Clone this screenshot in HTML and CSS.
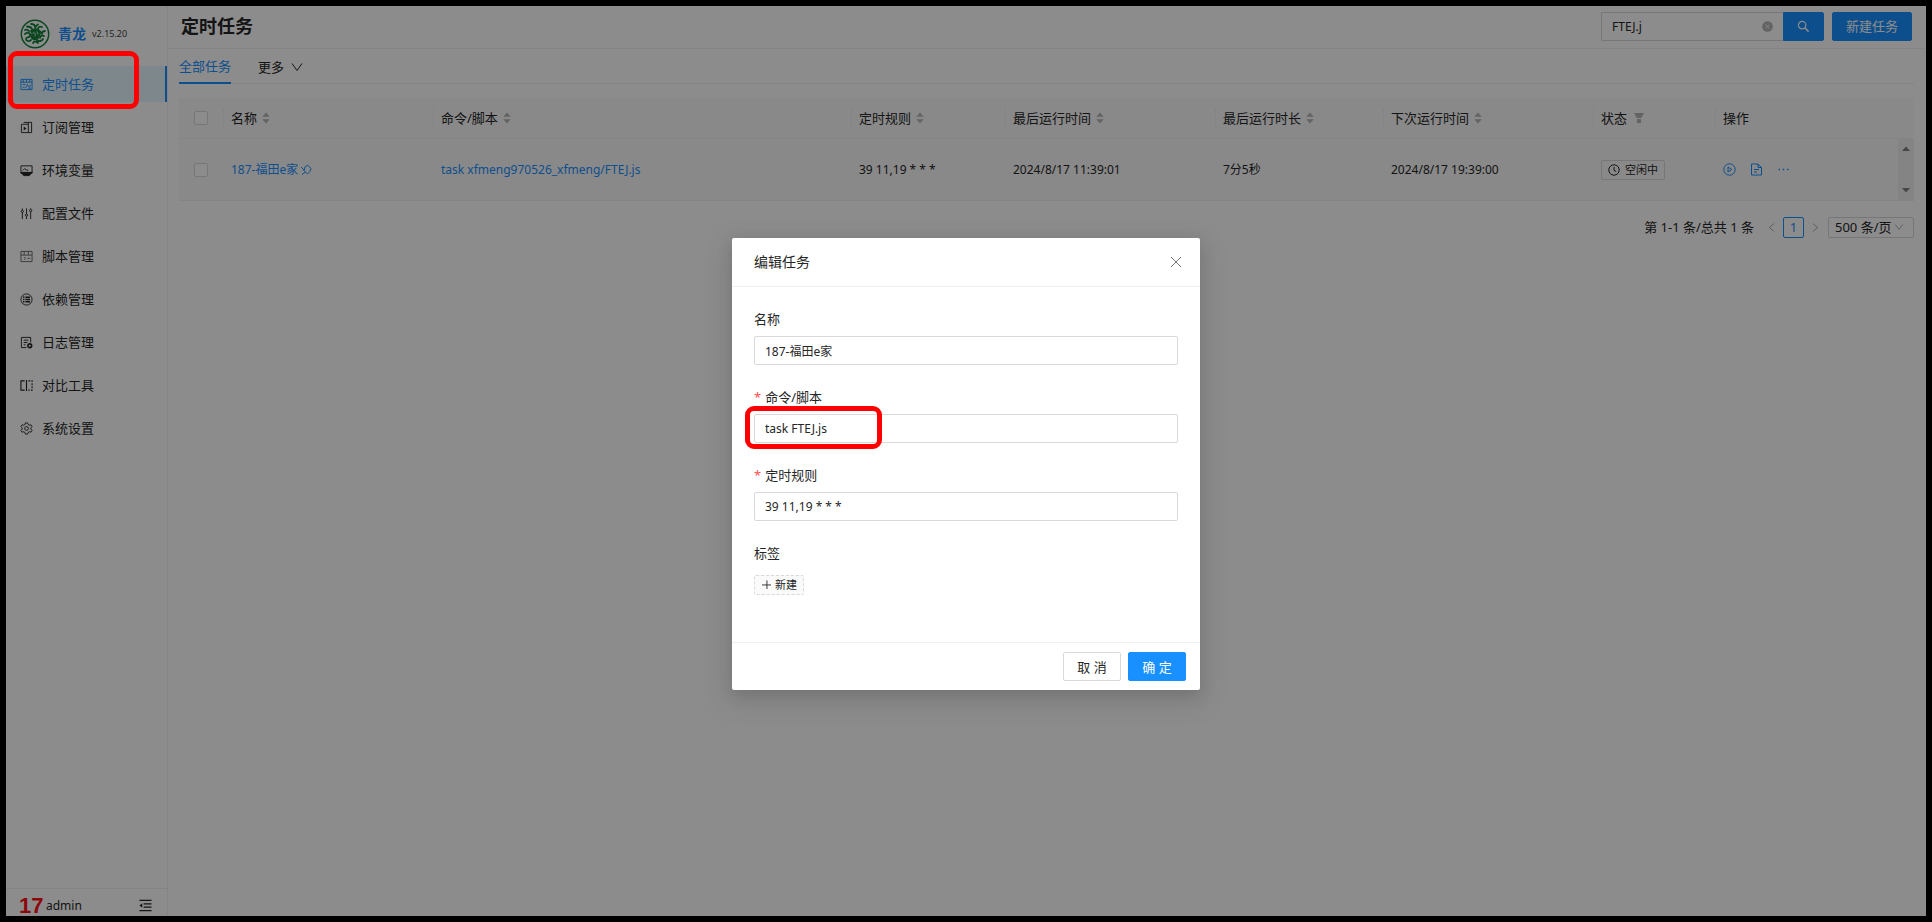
FILE: index.html
```
<!DOCTYPE html>
<html lang="zh-CN">
<head>
<meta charset="utf-8">
<title>定时任务</title>
<link rel="stylesheet" href="styles.css">
</head>
<body>
<svg class="defs" aria-hidden="true">
  <symbol id="sorter" viewBox="0 0 8 12"><path d="M4 0.5 7.7 4.800H0.300zM4 11.5 0.300 7.200H7.700z" fill="#b4b4b4"/></symbol>
</svg>
<div class="frame">
<div class="app">
  <aside class="sider">
    <a class="brand" href="#">
      <svg class="logo" viewBox="0 0 30 30" fill="none" stroke="#14803c" stroke-linecap="round">
        <circle cx="15" cy="15" r="13.700" stroke-width="1.500"/>
        <g stroke-width="1.800">
          <path d="M5 11c2-1 3 0 4 1M7 7.500c2 0 4 0 5 2.500M11 5c2 0 4 1 4 3M18 5.500c-2 1-3 2-2.500 4M22 8c-2-1-4 0-4 2s3 2 3 4M25 12c-2 0-3 1-3 3"/>
          <path d="M5 15c3-3 6 0 5 2s-4 1-4 3 3 3 5 1M17 21c2 2 5 1 6-1M24 17c-2-1-4 0-4 2M13 24c1-2 3-2 5 0"/>
        </g>
        <path d="M10 12c2-3 6-3 8-1 3 1 3 4 2 6-1 3-4 5-7 4-2-1-3-3-2-5s0-2-1-4z" fill="#14803c" stroke="none"/>
        <path d="M13 14c2-1 3 1 2 3M17 13l1 2" stroke="#d9ecdf" stroke-width="1"/>
      </svg>
      <span class="brand-name">青龙</span><span class="version">v2.15.20</span>
    </a>
    <nav class="menu">
      <a class="item active" href="#"><svg class="ico" viewBox="0 0 14 14"><path d="M1 1.500h12v11H1zM1 4.500h12M3.500 1.500v3M7 1.500v3M10.500 1.500v3M3 7h3M3 10h2M6 11l2-4 2 3 2-3M9 11h3"/></svg>定时任务</a>
      <a class="item" href="#"><svg class="ico" viewBox="0 0 14 14"><path d="M1.500 3.500h7.500v9H1.500zM9 1.500h3.500v11H9M4 1.500h5v2"/><path d="M4 5.800 7 8 4 10.200z" fill="currentColor" stroke="none"/></svg>订阅管理</a>
      <a class="item" href="#"><svg class="ico" viewBox="0 0 14 14"><path d="M1 2h12v8H1zM3 7l2-2 2 1.500h2"/><path d="M1 9h12l-3 3.500H4z" fill="currentColor"/></svg>环境变量</a>
      <a class="item" href="#"><svg class="ico" viewBox="0 0 14 14"><path d="M2.500 1.500v2M2.500 6v7M7 1.500v6M7 10v3M11.500 1.500v1M11.500 5v8"/><circle cx="2.500" cy="4.800" r="1.200"/><circle cx="7" cy="8.800" r="1.200"/><circle cx="11.500" cy="3.800" r="1.200"/></svg>配置文件</a>
      <a class="item" href="#"><svg class="ico thin" viewBox="0 0 14 14"><path d="M1 1.500h12v11H1zM1 5.500h12M4.500 1.500v4M9 1.500v4M4.500 7.500l1.500 1.500-1.500 1.500M8 9h3"/></svg>脚本管理</a>
      <a class="item" href="#"><svg class="ico" viewBox="0 0 14 14"><circle cx="7" cy="7" r="6"/><path d="M3.300 4.500h1.500M3.300 7h1.500M3.300 9.500h1.500M5.800 4.500h5M5.800 7h5M5.800 9.500h5" stroke-width="1.600"/></svg>依赖管理</a>
      <a class="item" href="#"><svg class="ico" viewBox="0 0 14 14"><path d="M7 12.500H1.500v-11h10V7M4 4.500h5M4 7h4M4 9.500h2"/><circle cx="10.500" cy="10.500" r="2" stroke-width="1.800"/></svg>日志管理</a>
      <a class="item" href="#"><svg class="ico" viewBox="0 0 14 14"><path d="M5 2H1v10h4M7 1v12" stroke-width="1.200"/><path d="M9 2h4v10H9" stroke-width="1.200" stroke-dasharray="2 1.300"/></svg>对比工具</a>
      <a class="item" href="#"><svg class="ico" viewBox="0 0 14 14"><path d="M5.800 1h2.400l.5 1.700 1.300.8 1.800-.5L13 5l-1.300 1.300v1.400L13 9l-1.200 2-1.800-.5-1.300.8-.5 1.700H5.800l-.5-1.700-1.300-.8-1.800.5L1 9l1.300-1.300V6.300L1 5l1.200-2 1.800.5 1.300-.8z"/><circle cx="7" cy="7" r="2"/></svg>系统设置</a>
    </nav>
    <footer class="user">
      <span class="avatar">17</span><span class="user-name">admin</span>
      <button class="fold" aria-label="收起菜单"><svg viewBox="0 0 14 14" class="ico heavy"><path d="M.5 1.500h13M5 5.200h8.500M5 8.800h8.500M.5 12.500h13"/><path d="M3.500 4.500v5L.5 7z" fill="currentColor" stroke="none"/></svg></button>
    </footer>
  </aside>

  <main class="main">
    <header class="page-head">
      <h1>定时任务</h1>
      <form class="search">
        <input type="text" value="FTEJ.j" aria-label="搜索">
        <button type="button" class="clear" aria-label="清除"><svg viewBox="0 0 12 12"><circle cx="6" cy="6" r="5.800" fill="#b4b4b4"/><path d="M4 4l4 4M8 4l-4 4" stroke="#fff"/></svg></button>
        <button type="button" class="btn primary go" aria-label="查询"><svg viewBox="0 0 14 14"><circle cx="5.500" cy="5.500" r="4" fill="none" stroke="#fff" stroke-width="1.300"/><path d="M8.500 8.500l4 4" stroke="#fff" stroke-width="1.600"/></svg></button>
      </form>
      <button class="btn primary create">新建任务</button>
    </header>
    <div class="content">
      <div class="tabs">
        <button class="tab on">全部任务</button>
        <button class="tab">更多<svg viewBox="0 0 12 12" class="chev"><path d="M1 2.500l5 7 5-7"/></svg></button>
      </div>
      <table class="tasks">
        <colgroup><col class="c-check"><col class="c-name"><col><col class="c-rule"><col class="c-last"><col class="c-dur"><col class="c-next"><col class="c-state"><col class="c-act"><col class="c-bar"></colgroup>
        <thead><tr>
          <th class="check"><input type="checkbox" aria-label="全选"></th>
          <th><span class="th">名称<svg class="sort"><use href="#sorter"/></svg></span></th>
          <th><span class="th">命令/脚本<svg class="sort"><use href="#sorter"/></svg></span></th>
          <th><span class="th">定时规则<svg class="sort"><use href="#sorter"/></svg></span></th>
          <th><span class="th">最后运行时间<svg class="sort"><use href="#sorter"/></svg></span></th>
          <th><span class="th">最后运行时长<svg class="sort"><use href="#sorter"/></svg></span></th>
          <th><span class="th">下次运行时间<svg class="sort"><use href="#sorter"/></svg></span></th>
          <th><span class="th">状态<svg class="filter" viewBox="0 0 12 12"><path d="M1 1h10L8.200 6H3.800zM4 7h4v4H4z" fill="#b4b4b4"/></svg></span></th>
          <th colspan="2"><span class="th">操作</span></th>
        </tr></thead>
        <tbody><tr>
          <td class="check"><input type="checkbox" aria-label="选择 187-福田e家"></td>
          <td><a class="name" href="#">187-福田e家<svg class="pin" viewBox="0 0 12 12"><path d="M7.500 1l3.500 3.500-1 3L7.500 10 4 6.500 5 3zM5.500 8 2 10.500M1 3l3.500 3.500"/></svg></a></td>
          <td><a href="#">task xfmeng970526_xfmeng/FTEJ.js</a></td>
          <td>39 11,19 * * *</td>
          <td>2024/8/17 11:39:01</td>
          <td>7分5秒</td>
          <td>2024/8/17 19:39:00</td>
          <td><span class="tag"><svg viewBox="0 0 12 12"><circle cx="6" cy="6" r="5.200"/><path d="M6 3v3.300l2.200 1.200"/></svg>空闲中</span></td>
          <td><span class="acts">
            <button aria-label="运行"><svg viewBox="0 0 13 13"><circle cx="6.500" cy="6.500" r="5.700"/><path d="M5 4v5l3.700-2.500z"/></svg></button>
            <button aria-label="日志"><svg viewBox="0 0 13 13"><path d="M1.500 1h6.500l3.500 3.500V12h-10zM8 1v3.500h3.500M4 6.500h5M4 9h3"/></svg></button>
            <button aria-label="更多"><svg viewBox="0 0 13 13"><path d="M1.500 6.500H3M5.750 6.500h1.500M10 6.500h1.500" stroke-width="1.500"/></svg></button>
          </span></td>
          <td class="bar"><div class="scroll"><svg viewBox="0 0 8 5"><path d="M0 5 4 .5 8 5z"/></svg><svg viewBox="0 0 8 5"><path d="M0 0 4 4.500 8 0z"/></svg></div></td>
        </tr></tbody>
      </table>
      <div class="pager">
        <span class="total">第 1-1 条/总共 1 条</span>
        <button class="step" aria-label="上一页"><svg viewBox="0 0 8 12"><path d="M7 1.500 1.500 6 7 10.500"/></svg></button>
        <button class="page">1</button>
        <button class="step" aria-label="下一页"><svg viewBox="0 0 8 12"><path d="M1 1.500 6.500 6 1 10.500"/></svg></button>
        <span class="size"><select aria-label="每页条数"><option>500 条/页</option></select><svg viewBox="0 0 12 12"><path d="M1.500 3l4.500 6 4.500-6"/></svg></span>
      </div>
    </div>
  </main>
</div>

<div class="mask">
  <section class="modal" role="dialog" aria-labelledby="dlg-title">
    <header class="modal-head"><h2 id="dlg-title">编辑任务</h2><button class="close" aria-label="关闭"><svg viewBox="0 0 12 12"><path d="M1 1l10 10M11 1 1 11"/></svg></button></header>
    <form class="modal-body">
      <div class="field"><label for="f-name">名称</label><input id="f-name" type="text" value="187-福田e家"></div>
      <div class="field marked"><label for="f-cmd" class="req">命令/脚本</label><input id="f-cmd" type="text" value="task FTEJ.js"><span class="mark mark-cmd"></span></div>
      <div class="field"><label for="f-rule" class="req">定时规则</label><input id="f-rule" type="text" value="39 11,19 * * *"></div>
      <div class="field"><label for="f-tag">标签</label><div class="tags"><button id="f-tag" type="button" class="add"><svg viewBox="0 0 10 10"><path d="M0 5.500h10M5.500 0.500v10"/></svg>新建</button></div></div>
    </form>
    <footer class="modal-foot"><button class="btn">取 消</button><button class="btn primary">确 定</button></footer>
  </section>
</div>
<span class="mark mark-menu"></span>
</div>
</body>
</html>
```
FILE: styles.css
```
* { box-sizing: border-box; }
body {
  margin: 0;
  background: #000;
  color: #262626;
  font: 13px/20px "Noto Sans", "Noto Sans CJK SC", sans-serif;
}
button, input, select { font: inherit; color: inherit; margin: 0; }
button { padding: 0; border: 0; background: none; cursor: pointer; }
a { color: #1890ff; text-decoration: none; }
svg { display: block; flex: none; }
.defs { position: absolute; width: 0; height: 0; }

.frame {
  position: relative;
  height: 100vh;
  border: 6px solid #000;
  overflow: hidden;
}
.app { display: flex; height: 100%; background: #fff; }

/* sidebar */
.sider {
  flex: none;
  width: 162px;
  display: flex;
  flex-direction: column;
  border-right: 1px solid #f0f0f0;
}
.brand { display: flex; align-items: center; height: 55px; padding: 0 14px; }
.logo { width: 30px; height: 30px; margin-right: 8px; }
.brand-name { font-size: 14px; font-weight: 700; margin-right: 6px; }
.version { font-size: 9px; color: #444; }
.menu { flex: 1; display: flex; flex-direction: column; gap: 7px; padding-top: 5px; }
.item {
  display: flex;
  align-items: center;
  gap: 9px;
  height: 36px;
  padding-left: 14px;
  color: #262626;
}
.item.active { color: #1890ff; background: #e6f7ff; border-right: 2px solid #1890ff; }
.ico { width: 13px; height: 13px; fill: none; stroke: currentColor; stroke-width: 1; }
.ico.heavy { stroke-width: 1.5; }
.ico.thin { opacity: .7; }
.user {
  display: flex;
  align-items: center;
  height: 28px;
  padding: 6px 15px 0 13px;
  border-top: 1px solid #f0f0f0;
}
.avatar { color: #ff1018; font: 700 22px/20px "Liberation Sans", Arial, sans-serif; width: 27px; }
.user-name { flex: 1; font-size: 12px; }

/* page */
.main { flex: 1; min-width: 0; }
.page-head {
  display: flex;
  align-items: center;
  height: 43px;
  padding: 0 14px 2px 13px;
  border-bottom: 1px solid #f0f0f0;
}
.page-head h1 { flex: 1; margin: 0; font-size: 18px; line-height: 28px; font-weight: 700; }
.btn {
  height: 29px;
  min-width: 58px;
  border: 1px solid #d9d9d9;
  border-radius: 2px;
  background: #fff;
}
.btn.primary { background: #1890ff; border-color: #1890ff; color: #fff; }
.search { display: flex; align-items: center; margin-right: 8px; }
.search input {
  width: 182px;
  height: 29px;
  padding: 0 30px 0 10px;
  border: 1px solid #d9d9d9;
  border-right: 0;
  border-radius: 2px 0 0 2px;
  font-size: 12px;
}
.clear { margin: 0 10px 0 -21px; }
.clear svg { width: 11px; height: 11px; }
.btn.go { width: 41px; min-width: 41px; display: grid; place-items: center; border-radius: 0 2px 2px 0; }
.go svg { width: 13px; height: 13px; }
.create { width: 80px; }
.content { padding: 0 12px 0 11px; }
.tabs { display: flex; gap: 27px; height: 35px; border-bottom: 1px solid #f0f0f0; }
.tab { display: flex; align-items: center; gap: 7px; height: 35px; }
.tab.on { color: #1890ff; border-bottom: 2px solid #1890ff; }
.chev { width: 12px; height: 12px; fill: none; stroke: currentColor; }

.tasks {
  width: 100%;
  margin-top: 14px;
  table-layout: fixed;
  border-collapse: separate;
  border-spacing: 0;
}
.c-check { width: 44px; }
.c-name, .c-last, .c-next { width: 210px; }
.c-rule { width: 154px; }
.c-dur { width: 168px; }
.c-state { width: 122px; }
.c-act { width: 183px; }
.c-bar { width: 16px; }
th, td { padding: 0 8px; text-align: left; font-weight: 400; background: #fafafa; border-bottom: 1px solid #f0f0f0; }
th { height: 41px; padding-left: 0; }
td { height: 62px; font-size: 12px; }
.th { display: flex; align-items: center; gap: 5px; height: 20px; padding-left: 8px; }
th + th .th { border-left: 1px solid #f0f0f0; padding-left: 7px; }
.sort { width: 8px; height: 12px; }
.filter { width: 12px; height: 12px; margin-left: 1px; }
.tasks .check { padding-left: 15px; }
.check input {
  display: block;
  appearance: none;
  width: 14px;
  height: 14px;
  border: 1px solid #d9d9d9;
  border-radius: 2px;
  background: #fff;
}
.name { display: flex; align-items: center; gap: 2px; }
.pin { width: 12px; height: 12px; fill: none; stroke: currentColor; }
.tag {
  display: inline-flex;
  align-items: center;
  gap: 5px;
  height: 20px;
  padding: 0 6px;
  border: 1px solid #d9d9d9;
  border-radius: 2px;
  font-size: 11px;
  vertical-align: middle;
}
.tag svg { width: 12px; height: 12px; fill: none; stroke: currentColor; }
.acts { display: flex; gap: 14px; }
.acts svg { width: 13px; height: 13px; fill: none; stroke: #1890ff; }
td.bar { padding: 0; }
.scroll {
  display: flex;
  flex-direction: column;
  align-items: center;
  justify-content: space-between;
  height: 61px;
  padding: 7px 0;
  background: #f1f1f1;
}
.scroll svg { width: 8px; height: 5px; fill: #808080; }

.pager { display: flex; align-items: center; justify-content: flex-end; margin-top: 15px; height: 22px; }
.total { margin-right: 14px; }
.step svg { width: 7px; height: 11px; fill: none; stroke: #a0a0a0; }
.page {
  width: 21px;
  height: 21px;
  margin: 0 8px;
  border: 1px solid #1890ff;
  border-radius: 2px;
  line-height: 19px;
  color: #1890ff;
}
.size { display: flex; align-items: center; margin-left: 9px; }
.size select {
  appearance: none;
  width: 86px;
  height: 21px;
  padding: 0 6px;
  border: 1px solid #d9d9d9;
  border-radius: 2px;
  line-height: 19px;
  background: #fff;
}
.size svg { width: 10px; height: 10px; margin: 0 10px 0 -20px; fill: none; stroke: #a0a0a0; }

/* dialog */
.mask {
  position: absolute;
  inset: 0;
  display: flex;
  justify-content: center;
  align-items: flex-start;
  padding-top: 232px;
  background: rgba(0, 0, 0, .45);
}
.modal {
  width: 468px;
  background: #fff;
  border-radius: 2px;
  box-shadow: 0 6px 16px rgba(0, 0, 0, .12), 0 9px 28px 8px rgba(0, 0, 0, .06);
}
.modal-head {
  display: flex;
  align-items: center;
  justify-content: space-between;
  height: 49px;
  padding: 0 18px 0 22px;
  border-bottom: 1px solid #f0f0f0;
}
.modal-head h2 { margin: 0; font-size: 14px; font-weight: 400; }
.close svg { width: 12px; height: 12px; fill: none; stroke: #737373; }
.modal-body { padding: 22px 22px 21px; }
.field { margin-bottom: 22px; }
.field label { display: block; height: 20px; margin-bottom: 7px; }
.req::before { content: "*"; color: #ff4d4f; margin-right: 4px; }
.field input {
  display: block;
  width: 100%;
  height: 29px;
  padding: 0 10px;
  border: 1px solid #d9d9d9;
  border-radius: 2px;
  font-size: 12px;
}
.tags { display: flex; align-items: center; height: 29px; }
.add {
  display: flex;
  align-items: center;
  gap: 4px;
  height: 20px;
  padding: 0 6px 0 7px;
  border: 1px dashed #d9d9d9;
  border-radius: 2px;
  background: #fafafa;
  font-size: 11px;
}
.add svg { width: 9px; height: 9px; fill: none; stroke: currentColor; }
.modal-foot {
  display: flex;
  justify-content: flex-end;
  gap: 7px;
  padding: 9px 14px;
  border-top: 1px solid #f0f0f0;
}

/* highlight outlines */
.mark { position: absolute; border: 5px solid #f00; border-radius: 9px; pointer-events: none; }
.mark-menu { left: 2px; top: 45px; width: 131px; height: 58px; }
.marked { position: relative; }
.mark-cmd { left: -9px; top: 19px; width: 137px; height: 43px; }
```
